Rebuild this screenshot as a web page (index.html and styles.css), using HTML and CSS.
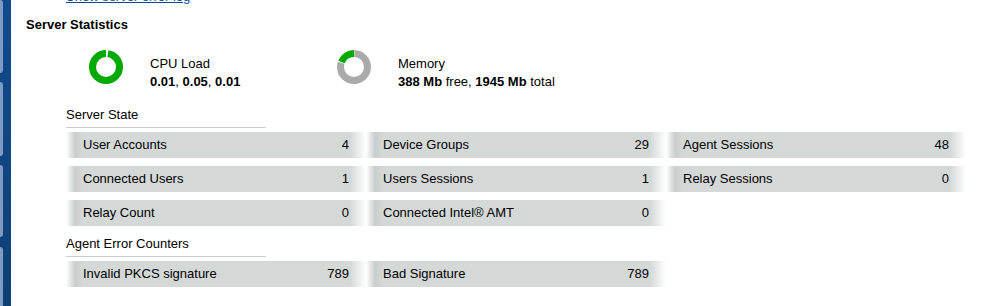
FILE: index.html
```html
<!DOCTYPE html>
<html lang="en">
<head>
    <meta charset="UTF-8">
    <meta name="viewport" content="width=device-width, initial-scale=1.0">
    <title>Server Statistics</title>
    <link rel="stylesheet" href="styles.css">
</head>
<body>

<div class="page">
    <div class="sidebar">
        <div class="tab tab-first"></div>
        <div class="tab tab-second"></div>
        <div class="tab tab-third"></div>
        <div class="tab tab-last"></div>
    </div>

    <div class="main">
        <div class="errlog"><a href="#">Show server error log</a></div>
        <h1 class="title">Server Statistics</h1>

        <div class="stats">
            <div class="stat">
                <!-- CPU load donut -->
                <svg class="donut" viewBox="0 0 34 34" width="34" height="34">
                    <circle cx="17" cy="17" r="13.5" fill="none" stroke="#00aa00" stroke-width="7"
                            stroke-dasharray="82.6 84.82" stroke-dashoffset="-1.9" transform="rotate(-90 17 17)"/>
                </svg>
                <div class="stat-text">
                    <div>CPU Load</div>
                    <div><b>0.01</b>, <b>0.05</b>, <b>0.01</b></div>
                </div>
            </div>
            <div class="stat">
                <!-- Memory donut: used (gray) then free (green) -->
                <svg class="donut" viewBox="0 0 34 34" width="34" height="34">
                    <circle cx="17" cy="17" r="13.5" fill="none" stroke="#aaaaaa" stroke-width="7"
                            stroke-dasharray="67.2 84.82" stroke-dashoffset="-0.35" transform="rotate(-90 17 17)"/>
                    <circle cx="17" cy="17" r="13.5" fill="none" stroke="#00aa00" stroke-width="7"
                            stroke-dasharray="16.3 84.82" stroke-dashoffset="-68.2" transform="rotate(-90 17 17)"/>
                </svg>
                <div class="stat-text">
                    <div>Memory</div>
                    <div><b>388 Mb</b> free, <b>1945 Mb</b> total</div>
                </div>
            </div>
        </div>

        <div class="section">
            <div class="section-head">Server State</div>
            <div class="grid">
                <div class="cell"><span>User Accounts</span><span>4</span></div>
                <div class="cell"><span>Device Groups</span><span>29</span></div>
                <div class="cell"><span>Agent Sessions</span><span>48</span></div>
                <div class="cell"><span>Connected Users</span><span>1</span></div>
                <div class="cell"><span>Users Sessions</span><span>1</span></div>
                <div class="cell"><span>Relay Sessions</span><span>0</span></div>
                <div class="cell"><span>Relay Count</span><span>0</span></div>
                <div class="cell"><span>Connected Intel&reg; AMT</span><span>0</span></div>
            </div>

            <div class="section-head second">Agent Error Counters</div>
            <div class="grid">
                <div class="cell"><span>Invalid PKCS signature</span><span>789</span></div>
                <div class="cell"><span>Bad Signature</span><span>789</span></div>
            </div>
        </div>
    </div>
</div>

</body>
</html>
```

FILE: styles.css
```css
body {
    font-family: "Liberation Sans", Arial, sans-serif;
    font-size: 13px;
    margin: 0;
    padding: 0;
    background-color: #ffffff;
    color: #000000;
    overflow: hidden;
}
.page {
    display: flex;
    height: 306px;
}
/* Left menu strip */
.sidebar {
    width: 11px;
    flex-shrink: 0;
    display: flex;
    flex-direction: column;
    gap: 9px;
    background: linear-gradient(to bottom, #104b8e, #0e4075);
}
.tab {
    width: 3px;
    background-color: #7f9bc3;
    border-radius: 0 3px 3px 0;
}
.tab-first {
    height: 73px;
}
.tab-second {
    height: 74px;
}
.tab-third {
    height: 72px;
}
.tab-last {
    flex: 1;
    margin-top: 1px;
    border-radius: 0 3px 0 0;
}
.main {
    flex: 1;
    padding-left: 15px;
}
/* Link is scrolled mostly out of view */
.errlog {
    margin: -11px 0 0 40px;
    line-height: 15px;
}
.errlog a {
    color: #0b4a9a;
}
.title {
    margin: 13px 0 0 0;
    font-size: 13px;
    line-height: 15px;
    font-weight: bold;
}
/* Donut charts */
.stats {
    display: flex;
    margin-top: 18px;
    padding-left: 63px;
}
.stat {
    width: 248px;
    display: flex;
    gap: 27px;
}
.donut {
    display: block;
    flex-shrink: 0;
}
.stat-text {
    margin-top: 5px;
    line-height: 18px;
}
/* Counter tables */
.section {
    margin-left: 40px;
}
.section-head {
    width: 200px;
    margin-top: 16px;
    line-height: 15px;
    padding-bottom: 5px;
    border-bottom: 1px solid #cccccc;
}
.section-head.second {
    margin-top: 10px;
}
.grid {
    display: grid;
    grid-template-columns: repeat(3, 300px);
    row-gap: 8px;
    margin-top: 4px;
}
.cell {
    display: flex;
    justify-content: space-between;
    height: 26px;
    line-height: 25px;
    padding: 0 17px;
    background: linear-gradient(to right, #ffffff 0, #c9cdcb 9px, #d4d8d7 17px, #d4d8d7 calc(100% - 16px), #ffffff 100%);
}
```
